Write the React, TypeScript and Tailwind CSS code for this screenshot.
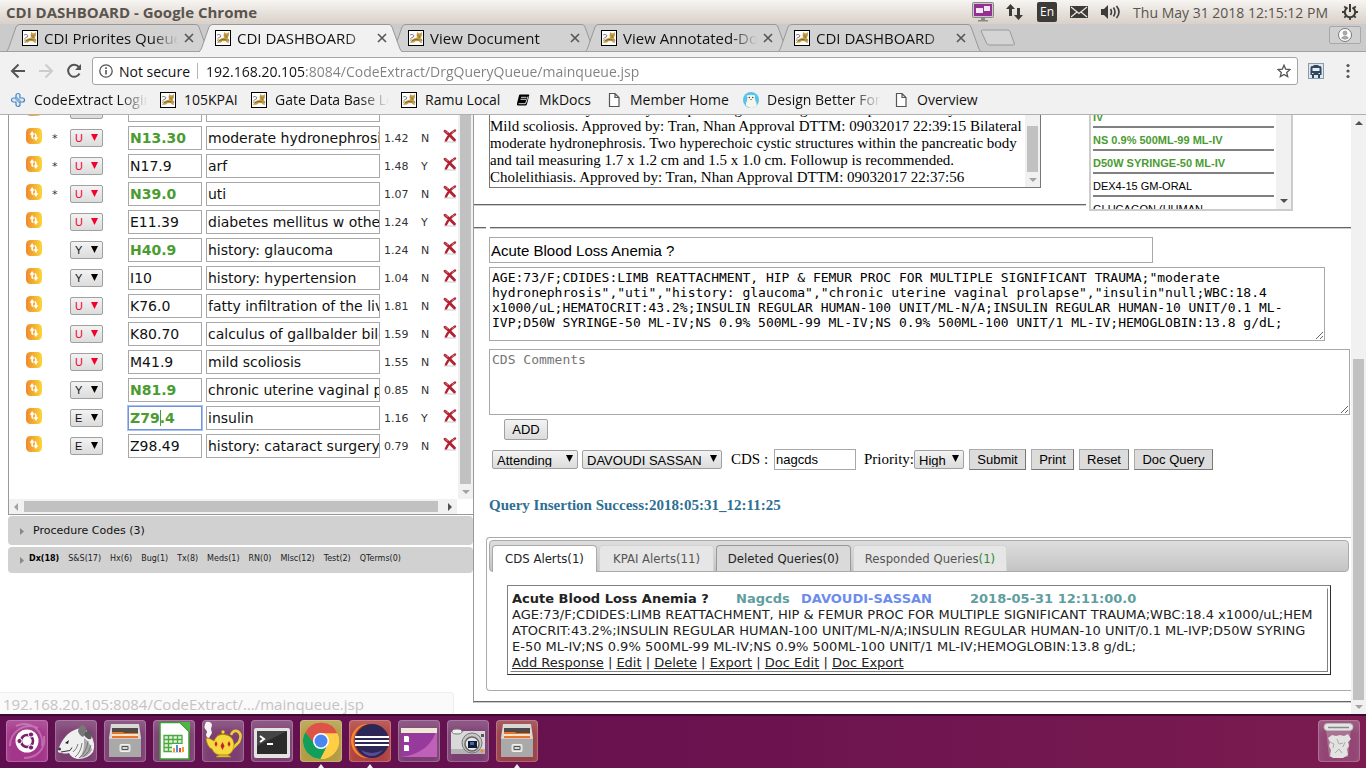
import React from "react";

const ui = "font-['Open_Sans','Noto_Sans',sans-serif]";
const sans = "font-['DejaVu_Sans',sans-serif]";
const arial = "font-['Liberation_Sans',sans-serif]";
const serif = "font-['Liberation_Serif',serif]";
const bevel = "border border-[#a0a0a0] rounded-[2px] bg-linear-to-b from-[#f3f3f3] to-[#dcdcdc]";
const flatButton = "h-[21px] border border-t-[#aaa] border-l-[#aaa] border-r-[#777] border-b-[#777] bg-[#dcdcdc]";

function CatIcon() {
  return (
    <svg className="size-4 shrink-0" viewBox="0 0 16 16">
      <rect x=".5" y=".5" width="15" height="15" fill="#fff" stroke="#000" />
      <path d="M2 13q1-3.500 4-4.500l3-1L8.500 5 9.300 2l1.500 1.300h1.500L13.800 2l.2 3-1 2.500.5 3 .5 2.500-2-.5-1.500-1.500-3 .3-1.500 1.200z" fill="#c9a045" />
      <path d="M4 10.500 8 9.500l3.500.5M9.500 5l1 .6M12.500 5l-.8.600M10.500 7h1.500" stroke="#6b5227" strokeWidth=".8" fill="none" />
      <path d="M2 5q2-1.500 4 .5l-1 2M2.500 8.500 5 7M2 10.500l1.500-1M13 9l1 2" stroke="#777" strokeWidth=".9" fill="none" />
    </svg>
  );
}

function PageIcon() {
  return (
    <svg className="size-4 shrink-0" viewBox="0 0 16 16" fill="#fff" stroke="#555" strokeWidth="1.200">
      <path d="M3.500 1.500h5.500l4 4v9H3.500zM9 1.500v4h4" />
    </svg>
  );
}

function PlusIcon() {
  return (
    <svg className="size-4 shrink-0" viewBox="0 0 16 16" fill="#dcecfa" stroke="#4d84bd" strokeWidth="1.200">
      <path d="M6 6V3.500a2 2 0 0 1 4 0V6h2.500a2 2 0 0 1 0 4H10v2.500a2 2 0 0 1-4 0V10H3.500a2 2 0 0 1 0-4z" />
      <path d="M6 6h2v2H6zM8 8h2v2H8z" fill="#fff" strokeWidth=".8" />
    </svg>
  );
}

function BookIcon() {
  return (
    <svg className="size-4 shrink-0" viewBox="0 0 16 16">
      <path d="M5 2.500h8.500q1 0 .7 1L12 12q-.3 1.500-1.500 1.500H3Q1.500 13.500 2 11.500l2-8q.2-1 1-1z" fill="#000" />
      <path d="M6 5.300h5.500M5.500 7.300H11M3.500 11.700h7L13 4.500" stroke="#f1f1f1" strokeWidth=".9" fill="none" />
    </svg>
  );
}

function BearIcon() {
  return (
    <svg className="size-4 shrink-0" viewBox="0 0 16 16">
      <circle cx="8" cy="8" r="8" fill="#55c3ee" />
      <path d="M4 3.500q1-1 2-.3 2-1 4 0 1-.7 2 .3.400 1-.3 1.800L12.500 9q1.500 2 1 5Q8 18 3 13.500 2.500 11 4 9l.5-3.500Q3.500 4.500 4 3.500z" fill="#f7f4ea" />
      <circle cx="6.300" cy="5.500" r=".7" fill="#333" />
      <circle cx="9.700" cy="5.500" r=".7" fill="#333" />
      <path d="m7 7 1 1 1-1z" fill="#333" />
    </svg>
  );
}

const tabs = [
  { title: "CDI Priorites Queue", active: false },
  { title: "CDI DASHBOARD", active: true },
  { title: "View Document", active: false },
  { title: "View Annotated-Doc", active: false },
  { title: "CDI DASHBOARD", active: false },
];

function TitleBar() {
  return (
    <header className={`flex h-6 shrink-0 items-center bg-linear-to-b from-[#f7f5f2] to-[#d9d0c8] pl-[6px] pr-2 text-[#5a544e] ${ui}`}>
      <h1 className="flex-1 text-[15px] font-bold">CDI DASHBOARD - Google Chrome</h1>
      <div className="flex items-center">
        <svg className="mr-3 h-5 w-[22px]" viewBox="0 0 22 20">
          <rect x=".5" y=".5" width="21" height="15" rx="1" fill="#c9c9c9" stroke="#888" />
          <rect x="2" y="2" width="18" height="12" fill="#94308f" />
          <path d="M4 6h7v5H4zM12 4h6v5h-6z" fill="#f4e6f3" />
          <path d="M9 16h4v2h3v1.500H6V18h3z" fill="#888" />
        </svg>
        <svg className="mr-[14px] h-4 w-[17px]" viewBox="0 0 17 16" fill="#3c3b37">
          <path d="M4.500 0 9 5H6v7H3V5H0zM12.500 16 8 11h3V4h3v7h3z" />
        </svg>
        <span className="mr-[13px] flex h-5 w-5 items-center justify-center rounded-[2px] bg-[#3c3b37] text-[12px] text-white">En</span>
        <svg className="mr-[13px] h-3 w-[18px]" viewBox="0 0 18 12">
          <path d="M0 0h18v12H0z" fill="#3c3b37" />
          <path d="m1 1 8 6.500L17 1M1 11l6-5M17 11l-6-5" stroke="#eee8e2" strokeWidth="1.200" fill="none" />
        </svg>
        <svg className="mr-3 h-4 w-5" viewBox="0 0 20 16" fill="none" stroke="#3c3b37" strokeWidth="1.600">
          <path d="M0 5h3l4-4v14l-4-4H0z" fill="#3c3b37" stroke="none" />
          <path d="M9.500 5q2 3 0 6M12.500 3.500q3 4.500 0 9M15.500 2q5 6 0 12" />
        </svg>
        <time className="mr-[14px] whitespace-nowrap text-[14px]">Thu May 31 2018 12:15:12 PM</time>
        <svg className="size-4" viewBox="0 0 16 16" fill="none" stroke="#3c3b37">
          <path d="M5.500 3.500a5.200 5.200 0 1 0 5 0" strokeWidth="2" />
          <path d="M8 0v8" strokeWidth="2" />
          <path d="M0 8h3M13 8h3M8 13v3M2.300 2.300l2 2M13.700 2.300l-2 2M2.300 13.700l2-2M13.700 13.700l-2-2" strokeWidth="1.800" />
        </svg>
      </div>
    </header>
  );
}

function TabStrip() {
  return (
    <nav className={`flex h-7 shrink-0 items-stretch border-b border-[#a0a0a0] bg-[#cbcbcb] pl-[6px] text-[15px] text-[#111] ${ui}`}>
      {tabs.map((t, i) => (
        <div key={i} className={`relative flex h-7 w-[205px] items-center pl-4 pr-[17px] ${i ? "-ml-3" : ""} ${t.active ? "z-10" : ""}`}>
          <svg className="absolute inset-0 h-full w-full" viewBox="0 0 205 28" preserveAspectRatio="none">
            <path d="M0 28 Q2 26 3 23L10 3Q11 .5 14 .5H190Q192 .5 193 3l8 22q1 3 4 3z" fill={t.active ? "#f1f1f1" : "#d2d2d2"} />
            <path d="M0 28 Q2 26 3 23L10 3Q11 .5 14 .5H190Q192 .5 193 3l8 22q1 3 4 3" fill="none" stroke="#989898" />
            {!t.active && <path d="M0 27.500H205" stroke="#a0a0a0" />}
          </svg>
          <span className="relative flex w-full items-center">
            <CatIcon />
            <a href="#tab" className="ml-[6px] w-[134px] overflow-hidden whitespace-nowrap [mask-image:linear-gradient(90deg,#000_108px,transparent_134px)]">{t.title}</a>
            <button aria-label="Close tab" className="ml-auto">
              <svg className="size-[10px]" viewBox="0 0 10 10" stroke="#555" strokeWidth="1.600"><path d="m1 1 8 8M9 1 1 9" /></svg>
            </button>
          </span>
        </div>
      ))}
      <button aria-label="New tab" className="ml-[-3px] self-center">
        <svg className="h-[18px] w-9" viewBox="0 0 36 18"><path d="M1.500 3q-.8-2 1-2h25q2 0 2.700 2l4 11q.8 2-1 2h-24q-2 0-2.700-2z" fill="#d4d4d4" stroke="#999" /></svg>
      </button>
      <button aria-label="Profile" className="ml-auto mr-[5px] mt-[2px] flex h-[18px] w-8 items-center justify-center rounded-[2px] border border-[#a8a8a8] bg-[#d0d0d0]">
        <svg className="size-[14px]" viewBox="0 0 14 14"><circle cx="7" cy="7" r="6.500" fill="#fff" stroke="#777" /><circle cx="7" cy="5" r="2" fill="#aaa" stroke="#888" strokeWidth=".6" /><path d="M3.500 10q3.500-4 7 0-3.500 2.500-7 0z" fill="#aaa" stroke="#888" strokeWidth=".6" /></svg>
      </button>
    </nav>
  );
}

function Toolbar() {
  return (
    <div className={`flex h-[38px] shrink-0 items-center bg-[#f1f1f1] pl-[10px] pr-4 text-[14px] text-[#111] ${ui}`}>
      <button aria-label="Back" className="mr-3"><svg className="size-4" viewBox="0 0 16 16" fill="none" stroke="#555" strokeWidth="2"><path d="M15 8H2M8.500 1.500 2 8l6.500 6.500" /></svg></button>
      <button aria-label="Forward" className="mr-3"><svg className="size-4" viewBox="0 0 16 16" fill="none" stroke="#ccc" strokeWidth="2"><path d="M1 8h13M7.500 1.500 14 8l-6.500 6.500" /></svg></button>
      <button aria-label="Reload" className="mr-[10px]"><svg className="size-4" viewBox="0 0 16 16" fill="none" stroke="#555" strokeWidth="2"><path d="M13.500 10.500A6 6 0 1 1 12.800 4" /><path d="M15 1v6H9z" fill="#555" stroke="none" /></svg></button>
      <div className="flex h-7 flex-1 items-center rounded-[3px] border border-[#a5a5a5] bg-white pl-[6px] pr-[6px]">
        <svg className="mr-[6px] size-[14px]" viewBox="0 0 14 14" fill="none" stroke="#555"><circle cx="7" cy="7" r="6.200" strokeWidth="1.300" /><path d="M7 6v4.500M7 3.300V5" strokeWidth="1.600" /></svg>
        <span className="w-[70px] whitespace-nowrap">Not secure</span>
        <span className="mx-2 h-4 w-px bg-[#b5b5b5]" />
        <input aria-label="Address" defaultValue="192.168.20.105:8084/CodeExtract/DrgQueryQueue/mainqueue.jsp" className="min-w-0 flex-1 bg-[linear-gradient(90deg,#111_99px,#808080_99px)] bg-clip-text text-transparent outline-none" />
        <button aria-label="Bookmark this page"><svg className="size-[14px]" viewBox="0 0 14 14" fill="none" stroke="#555" strokeWidth="1.300"><path d="m7 1.200 1.700 4 4.300.4-3.300 2.800 1 4.200L7 10.400l-3.700 2.200 1-4.200L1 5.600l4.300-.4z" /></svg></button>
      </div>
      <svg className="ml-[10px] mr-[22px] size-4" viewBox="0 0 16 16">
        <rect x=".5" y=".5" width="15" height="15" fill="#dfe6ec" stroke="#8b9cab" />
        <path d="M5.500 2h5v1H12q1.500 0 1.500 2v7h-11V5Q2.500 3 4 3h1.500zM4 12h2v3H4zM10 12h2v3h-2z" fill="#2f4760" />
        <path d="M4.500 5h7v3h-7zM4 10h1.500v1H4zM10.500 10H12v1h-1.500z" fill="#e8eef3" />
      </svg>
      <button aria-label="Menu"><svg className="h-4 w-1" viewBox="0 0 4 16" fill="#555"><circle cx="2" cy="2.500" r="1.600" /><circle cx="2" cy="8" r="1.600" /><circle cx="2" cy="13.500" r="1.600" /></svg></button>
    </div>
  );
}

function Bookmark({ icon, label, width, fade }: { icon: React.ReactNode; label: string; width: string; fade?: boolean }) {
  return (
    <a href="#bookmark" className={`flex shrink-0 items-center gap-2 ${width}`}>
      {icon}
      <span className={`min-w-0 flex-1 overflow-hidden whitespace-nowrap ${fade ? "[mask-image:linear-gradient(90deg,#000_75%,transparent_100%)]" : ""}`}>{label}</span>
    </a>
  );
}

function Bookmarks() {
  return (
    <div className={`flex h-[25px] shrink-0 items-start border-b border-[#b0b0b0] bg-[#f1f1f1] pl-[10px] text-[14px] leading-5 text-[#111] ${ui}`}>
      <Bookmark icon={<PlusIcon />} label="CodeExtract Login" width="w-[138px] mr-3" fade />
      <Bookmark icon={<CatIcon />} label="105KPAI" width="w-[91px]" />
      <Bookmark icon={<CatIcon />} label="Gate Data Base Login" width="w-[138px] mr-3" fade />
      <Bookmark icon={<CatIcon />} label="Ramu Local" width="w-[114px]" />
      <Bookmark icon={<BookIcon />} label="MkDocs" width="w-[91px]" />
      <Bookmark icon={<PageIcon />} label="Member Home" width="w-[137px]" />
      <Bookmark icon={<BearIcon />} label="Design Better Forms" width="w-[138px] mr-3" fade />
      <Bookmark icon={<PageIcon />} label="Overview" width="w-[100px]" />
    </div>
  );
}

function Arrow({ dir, dark }: { dir: "up" | "down" | "left" | "right"; dark?: boolean }) {
  const d = { up: "M0 6h8L4 2z", down: "M0 2h8L4 6z", left: "M6 0v8L2 4z", right: "M2 0v8l4-4z" }[dir];
  return <svg className="size-2 shrink-0" viewBox="0 0 8 8" fill={dark ? "#505050" : "#a3a3a3"}><path d={d} /></svg>;
}

const codes = [
  { star: false, poa: "U", code: "", hit: false, text: "", w: "", yn: "" },
  { star: true, poa: "U", code: "N13.30", hit: true, text: "moderate hydronephrosis", w: "1.42", yn: "N" },
  { star: true, poa: "U", code: "N17.9", hit: false, text: "arf", w: "1.48", yn: "Y" },
  { star: true, poa: "U", code: "N39.0", hit: true, text: "uti", w: "1.07", yn: "N" },
  { star: false, poa: "U", code: "E11.39", hit: false, text: "diabetes mellitus w other", w: "1.24", yn: "Y" },
  { star: false, poa: "Y", code: "H40.9", hit: true, text: "history: glaucoma", w: "1.24", yn: "N" },
  { star: false, poa: "Y", code: "I10", hit: false, text: "history: hypertension", w: "1.04", yn: "N" },
  { star: false, poa: "U", code: "K76.0", hit: false, text: "fatty infiltration of the liver", w: "1.81", yn: "N" },
  { star: false, poa: "U", code: "K80.70", hit: false, text: "calculus of gallbalder bile", w: "1.59", yn: "N" },
  { star: false, poa: "U", code: "M41.9", hit: false, text: "mild scoliosis", w: "1.55", yn: "N" },
  { star: false, poa: "Y", code: "N81.9", hit: true, text: "chronic uterine vaginal prolapse", w: "0.85", yn: "N" },
  { star: false, poa: "E", code: "Z79.4", hit: true, text: "insulin", w: "1.16", yn: "Y", focus: true },
  { star: false, poa: "E", code: "Z98.49", hit: false, text: "history: cataract surgery", w: "0.79", yn: "N" },
];

function CodeTable() {
  return (
    <table className={`-mt-[19px] w-[450px] table-fixed border-collapse text-[11px] text-[#333] ${sans}`}>
      <colgroup>
        <col className="w-[43px]" /><col className="w-[18px]" /><col className="w-[58px]" /><col className="w-[78px]" />
        <col className="w-[178px]" /><col className="w-[37px]" /><col className="w-[22px]" /><col className="w-4" />
      </colgroup>
      <tbody>
        {codes.map((c, i) => (
          <tr key={i} className="h-7">
            <td className="p-0 pb-1 pl-[17px]">
              <svg className="size-4" viewBox="0 0 16 16">
                <defs><linearGradient id={`g${i}`}><stop offset="0" stopColor="#ef8a2c" /><stop offset="1" stopColor="#fbd638" /></linearGradient></defs>
                <rect width="16" height="16" rx="4.500" fill={`url(#g${i})`} />
                <path d="M3.600 6.800 6.100 3l2.500 3.800H7V9.500q0 1 1 1.700-2.700-.2-2.700-2.500V6.800zM12.400 9.200 9.900 13 7.400 9.200H9V6.500q0-1-1-1.700 2.700.2 2.700 2.500v1.900z" fill="#fff" />
              </svg>
            </td>
            <td className="p-0 pt-[2px]">{c.star ? "*" : ""}</td>
            <td className="p-0 pb-px">
              <span className="relative block w-[33px]">
                <select aria-label="POA" defaultValue={c.poa} className={`block h-[18px] w-full appearance-none pl-1 text-[11px] ${arial} ${bevel} ${c.poa === "U" ? "text-[#f5002e]" : "text-[#111]"}`}>
                  <option>{c.poa}</option>
                </select>
                <span className={`pointer-events-none absolute right-[5px] top-[5px] ${c.poa === "U" ? "text-[#f5002e]" : "text-black"}`}>
                  <svg className="h-[7px] w-[7px]" viewBox="0 0 7 7" fill="currentColor"><path d="M0 0h7L3.500 7z" /></svg>
                </span>
              </span>
            </td>
            <td className="p-0">
              <span className="relative block w-[74px]">
                <input aria-label="Code" defaultValue={c.code} className={`block h-6 w-full border pl-px text-[14px] ${c.focus ? "border-[#6f93dd] ring-1 ring-[#a9c0f0]" : "border-[#a8a8a8]"} ${c.hit ? "font-bold text-[#4a9c30]" : "text-[#111]"}`} />
                {c.focus && <span className="absolute left-8 top-1 h-4 w-px bg-[#4a9c30]" />}
              </span>
            </td>
            <td className="p-0"><input aria-label="Description" defaultValue={c.text} className="block h-6 w-[174px] border border-[#a8a8a8] pl-px text-[14px] text-[#111]" /></td>
            <td className="p-0 pt-[2px]">{c.w}</td>
            <td className="p-0 pt-[2px]">{c.yn}</td>
            <td className="p-0 pb-1">
              <button aria-label="Delete code" className="block">
                <svg className="size-[14px]" viewBox="0 0 14 14" fill="none">
                  <path d="M1 13h12" stroke="#ddd" strokeWidth="1.500" />
                  <path d="M2 2.200q5 4 9.500 8.800" stroke="#b3202f" strokeWidth="2.800" strokeLinecap="round" />
                  <path d="M12 1.500Q6 5 3 11.500" stroke="#b3202f" strokeWidth="2.400" strokeLinecap="round" />
                  <path d="M2.200 2 5 4.200M9 3.600l2.500-1.800" stroke="#e07a83" strokeWidth=".9" />
                </svg>
              </button>
            </td>
          </tr>
        ))}
      </tbody>
    </table>
  );
}

const cats = ["S&S(17)", "Hx(6)", "Bug(1)", "Tx(8)", "Meds(1)", "RN(0)", "MIsc(12)", "Test(2)", "QTerms(0)"];

function LeftPanel() {
  return (
    <aside className={`flex w-[473px] shrink-0 flex-col pl-2 ${sans}`}>
      <div className="flex h-[400px] flex-col border-b border-l border-[#999]">
        <div className="flex min-h-0 flex-1">
          <div className="flex-1 overflow-hidden"><CodeTable /></div>
          <div className="flex w-[15px] flex-col items-center bg-[#f1f1f1]">
            <span className="w-[11px] flex-1 bg-[#c1c1c1]" />
            <span className="flex h-[15px] items-center"><Arrow dir="down" /></span>
          </div>
        </div>
        <div className="mr-4 flex h-[15px] items-center bg-[#f1f1f1] px-[3px]">
          <Arrow dir="left" />
          <span className="ml-1 mr-2 h-[11px] flex-1 bg-[#c1c1c1]" />
          <Arrow dir="right" dark />
        </div>
      </div>
      <button className="mt-px flex h-[29px] items-center gap-2 rounded-[4px] bg-[#d1d1d1] pl-[11px] pt-[2px] text-[11px] text-[#111]">
        <svg className="h-[7px] w-[6px]" viewBox="0 0 6 7" fill="#888"><path d="M1 0v7l4-3.500z" /></svg>
        Procedure Codes (3)
      </button>
      <div className="mt-[2px] flex h-[26px] items-center gap-[9px] rounded-[4px] bg-[#d1d1d1] pb-[2px] pl-[11px] text-[8px] text-[#222]">
        <svg className="-mr-[5px] mt-[2px] h-[7px] w-[6px]" viewBox="0 0 6 7" fill="#888"><path d="M1 0v7l4-3.500z" /></svg>
        <a href="#dx" className="font-bold text-black">Dx(18)</a>
        {cats.map((c) => <a key={c} href="#category">{c}</a>)}
      </div>
    </aside>
  );
}

function Drop({ label, value, width }: { label: string; value: string; width: string }) {
  return (
    <span className={`relative ${width}`}>
      <select aria-label={label} defaultValue={value} className={`block h-[19px] w-full appearance-none pb-px pl-1 text-[13px] text-black ${bevel}`}>
        <option>{value}</option>
      </select>
      <span className="pointer-events-none absolute right-[5px] top-[5px]">
        <svg className="size-[7px]" viewBox="0 0 7 7"><path d="M0 0h7L3.500 7z" /></svg>
      </span>
    </span>
  );
}

const orders = [
  { t: "NS 0.9% 500ML-99 ML-IV", hit: true },
  { t: "D50W SYRINGE-50 ML-IV", hit: true },
  { t: "DEX4-15 GM-ORAL", hit: false },
  { t: "GLUCAGON (HUMAN", hit: false },
];

function QueryForm() {
  return (
    <form className={`pl-4 text-black ${arial}`} onSubmit={(e) => e.preventDefault()}>
      <input aria-label="Query title" defaultValue="Acute Blood Loss Anemia ?" className="mt-2 block h-[26px] w-[664px] max-w-full border border-[#a8a8a8] pl-px text-[15px]" />
      <textarea
        aria-label="Query text"
        defaultValue={'AGE:73/F;CDIDES:LIMB REATTACHMENT, HIP & FEMUR PROC FOR MULTIPLE SIGNIFICANT TRAUMA;"moderate hydronephrosis","uti","history: glaucoma","chronic uterine vaginal prolapse","insulin"null;WBC:18.4 x1000/uL;HEMATOCRIT:43.2%;INSULIN REGULAR HUMAN-100 UNIT/ML-N/A;INSULIN REGULAR HUMAN-10 UNIT/0.1 ML-IVP;D50W SYRINGE-50 ML-IV;NS 0.9% 500ML-99 ML-IV;NS 0.9% 500ML-100 UNIT/1 ML-IV;HEMOGLOBIN:13.8 g/dL;'}
        className="mt-1 block h-[74px] w-[836px] max-w-full resize border border-[#a8a8a8] p-[2px] font-['DejaVu_Sans_Mono',monospace] text-[13px] leading-[15px]"
      />
      <textarea aria-label="CDS Comments" placeholder="CDS Comments" className="mt-2 block h-[66px] w-[861px] max-w-full resize border border-[#a8a8a8] p-[2px] font-['DejaVu_Sans_Mono',monospace] text-[13px] leading-[15px] placeholder:text-[#757575]" />
      <button className={`ml-[15px] mt-1 block h-[21px] w-11 text-[13px] ${bevel}`}>ADD</button>
      <div className="ml-[3px] mt-[9px] flex h-[21px] items-center whitespace-nowrap text-[13px]">
        <Drop label="Provider type" value="Attending" width="w-[86px] mr-1" />
        <Drop label="Provider" value="DAVOUDI SASSAN" width="w-[140px]" />
        <label htmlFor="cds" className={`ml-[9px] w-[43px] text-[15px] ${serif}`}>CDS :</label>
        <input id="cds" defaultValue="nagcds" className="h-[21px] w-[82px] border border-[#a8a8a8] pl-px" />
        <span className={`ml-2 w-[50px] text-[15px] ${serif}`}>Priority:</span>
        <Drop label="Priority" value="High" width="w-[50px]" />
        <span className="ml-[5px] flex gap-[5px]">
          <button className={`w-[57px] ${flatButton}`}>Submit</button>
          <button className={`w-[43px] ${flatButton}`}>Print</button>
          <button className={`w-[50px] ${flatButton}`}>Reset</button>
          <button className={`w-[79px] ${flatButton}`}>Doc Query</button>
        </span>
      </div>
    </form>
  );
}

const alertTabs = [
  { t: "CDS Alerts", n: "(1)", w: "w-[105px]", c: "border-[#aaa] bg-white text-[#222] h-[27px]" },
  { t: "KPAI Alerts", n: "(11)", w: "w-[115px]", c: "border-[#d3d3d3] border-b-0 bg-[#e6e6e6] text-[#555] h-[26px]" },
  { t: "Deleted Queries", n: "(0)", w: "w-[135px]", c: "border-[#999] border-b-0 bg-[#dadada] text-[#222] h-[26px]" },
  { t: "Responded Queries", n: "(1)", w: "w-[154px]", c: "border-[#d3d3d3] border-b-0 bg-[#e6e6e6] text-[#555] h-[26px]", green: true },
];

const alertLines = [
  "AGE:73/F;CDIDES:LIMB REATTACHMENT, HIP & FEMUR PROC FOR MULTIPLE SIGNIFICANT TRAUMA;WBC:18.4 x1000/uL;HEM",
  "ATOCRIT:43.2%;INSULIN REGULAR HUMAN-100 UNIT/ML-N/A;INSULIN REGULAR HUMAN-10 UNIT/0.1 ML-IVP;D50W SYRING",
  "E-50 ML-IV;NS 0.9% 500ML-99 ML-IV;NS 0.9% 500ML-100 UNIT/1 ML-IV;HEMOGLOBIN:13.8 g/dL;",
];

function Alerts() {
  const actions = ["Add Response", "Edit", "Delete", "Export", "Doc Edit", "Doc Export"];
  return (
    <section className={`ml-[13px] mt-[23px] h-[154px] rounded-l-[4px] border border-r-0 border-[#aaa] p-[2px] ${sans}`}>
      <div className="flex h-8 items-end gap-[2px] rounded-[4px] border border-[#aaa] bg-linear-to-b from-[#dedede] to-[#c4c4c4] pl-[2px] font-['DejaVu_Sans_Condensed','DejaVu_Sans',sans-serif] text-[13px]">
        {alertTabs.map((a) => (
          <button key={a.t} className={`whitespace-nowrap rounded-t-[4px] border border-b-0 ${a.w} ${a.c} ${a.t === "CDS Alerts" ? "-mb-px" : ""}`}>
            {a.t}<span className={a.green ? "text-[#2c8a2c]" : ""}>{a.n}</span>
          </button>
        ))}
      </div>
      <table className="ml-[18px] mt-[13px] w-[824px] border-separate border-spacing-[2px] border border-[#808080] border-b-[#2c2c2c] border-r-[#2c2c2c] text-[13px] leading-4 text-[#222]">
        <tbody>
          <tr>
            <td className="whitespace-nowrap border border-white border-b-[#808080] border-r-[#808080] p-0 pl-px pt-[2px]">
              <div className="flex font-bold">
                <span className="w-[224px]">Acute Blood Loss Anemia ?</span>
                <span className="w-[65px] text-[#5f9ea0]">Nagcds</span>
                <span className="w-[169px] text-[#6c8cee]">DAVOUDI-SASSAN</span>
                <span className="text-[#5f9ea0]">2018-05-31 12:11:00.0</span>
              </div>
              {alertLines.map((l) => <p key={l}>{l}</p>)}
              <div>
                {actions.map((a, i) => (
                  <React.Fragment key={a}>{i > 0 && " | "}<a href="#action" className="underline">{a}</a></React.Fragment>
                ))}
              </div>
            </td>
          </tr>
        </tbody>
      </table>
    </section>
  );
}

function RightPanel() {
  return (
    <main className="flex min-w-0 flex-1 overflow-hidden bg-white">
      <div className="flex min-w-0 flex-1 flex-col self-start overflow-hidden border-l border-[#999]">
        <div className="flex">
          <div className="w-[612px]">
            <div className={`ml-[15px] flex h-[73px] w-[552px] overflow-hidden border border-t-0 border-[#777] text-[15px] leading-[17px] text-black ${serif}`}>
              <p className="-mt-[14px] flex-1 whitespace-pre-line">
                {"Bilateral renal cysts and hydronephrosis grade changes of the spine anteriorly\nMild scoliosis. Approved by: Tran, Nhan Approval DTTM: 09032017 22:39:15 Bilateral moderate hydronephrosis. Two hyperechoic cystic structures within the pancreatic body and tail measuring 1.7 x 1.2 cm and 1.5 x 1.0 cm. Followup is recommended. Cholelithiasis. Approved by: Tran, Nhan Approval DTTM: 09032017 22:37:56"}
              </p>
              <div className="flex w-[15px] flex-col items-center bg-[#f1f1f1]">
                <span className="mt-[11px] w-[11px] flex-1 bg-[#c1c1c1]" />
                <span className="flex h-[15px] items-center"><Arrow dir="down" /></span>
              </div>
            </div>
            <hr className="mt-4 border-b border-t border-b-[#ccc] border-t-[#666]" />
          </div>
          <div className="ml-[3px] flex h-24 w-[204px] overflow-hidden border-2 border-t-0 border-[#ccc]">
            <ul className={`ml-[2px] flex-1 overflow-hidden text-[11px] leading-[13px] text-black ${arial}`}>
              <li className="flex h-[13px] items-end overflow-hidden border-b-2 border-[#808080] pb-[2px] font-bold text-[#4a9c30]">IV</li>
              {orders.map((o) => (
                <li key={o.t} className={`h-[23px] whitespace-nowrap border-b-2 border-[#808080] pt-[6px] ${o.hit ? "font-bold text-[#4a9c30]" : ""}`}>{o.t}</li>
              ))}
            </ul>
            <div className="ml-[2px] flex w-[15px] items-end justify-center bg-[#f1f1f1] pb-1"><Arrow dir="down" dark /></div>
          </div>
        </div>
        <div className="mt-4 flex gap-1">
          <hr className="w-3 border-b border-t border-b-[#ccc] border-t-[#666]" />
          <hr className="flex-1 border-b border-t border-b-[#ccc] border-t-[#666]" />
        </div>
        <div className="-ml-px flex flex-col">
          <QueryForm />
          <p className={`ml-4 mt-[27px] text-[15px] font-bold leading-[17px] text-[#2f6f93] ${serif}`}>Query Insertion Success:2018:05:31_12:11:25</p>
          <Alerts />
        </div>
        <hr className="mt-[10px] border-b border-t border-b-[#ccc] border-t-[#666]" />
      </div>
      <div className="flex w-[15px] shrink-0 flex-col items-center bg-[#f1f1f1]">
        <span className="flex h-[15px] items-center"><Arrow dir="up" dark /></span>
        <span className="mt-auto h-[57%] w-[11px] bg-[#c1c1c1]" />
        <span className="flex h-[14px] items-center"><Arrow dir="down" /></span>
      </div>
    </main>
  );
}

function Cabinet() {
  return (
    <g>
      <path d="M7 4h28l2 14v19H5V18z" fill="#d9d9d7" />
      <path d="M8 8h26v9H8z" fill="#4d4a48" />
      <path d="M8 12h11l1 1h14v5H8z" fill="#e8752a" />
      <path d="M8 14h26v2H8z" fill="#fbe3c8" />
      <path d="M5 18h32v19H5z" fill="#a9a9a9" />
      <path d="M5 18h32v1H5z" fill="#ccc" />
      <rect x="16" y="24.500" width="10" height="7" rx="1" fill="#d5d5d5" stroke="#fff" strokeWidth=".8" />
      <path d="M18 26.500h6v3h-6z" fill="#d5d5d5" stroke="#555" />
    </g>
  );
}

const apps: { name: string; tile: string; open?: boolean; art: React.ReactNode }[] = [
  {
    name: "Dash", tile: "bg-[#a3358a]", art: (
      <g><path d="M4 26C4 12 18 2 32 8M38 16c2 14-8 22-20 22M10 6c14-6 28 4 26 20" fill="none" stroke="#d9a0cc" strokeWidth="2" opacity=".5" />
        <circle cx="21" cy="21" r="11.500" fill="#fff" /><circle cx="21" cy="21" r="6" fill="none" stroke="#7b2167" strokeWidth="2.600" />
        <g fill="#7b2167" stroke="#fff"><circle cx="13.500" cy="21" r="2.600" /><circle cx="25" cy="14.500" r="2.600" /><circle cx="25" cy="27.500" r="2.600" /></g></g>
    ),
  },
  {
    name: "Possum", tile: "bg-[#7d3f73]", art: (
      <g><path d="M3 30Q9 13 22 9q7-3 14 6 5 9 2 17-5 7-15 7-7-1-9-6-4 1-7 0-5 0-4-3z" fill="#efefef" />
        <path d="M23 11q1-6 5-6 4 1 3 8l-3 4q-4-2-5-6z" fill="#777" />
        <path d="M29 15q2-5 6-4 3 4 1 8-4 1-7-4z" fill="#5c5c5c" />
        <path d="M24 38q6-6 5-20 6 4 8 12-3 7-13 8z" fill="#a9a9a9" />
        <path d="M20 37q6-5 7-14M24 38q8-6 9-17M28 37q7-5 8-12M18 32q4-3 5-8" fill="none" stroke="#6f6f6f" strokeWidth=".9" />
        <path d="m10 23 4-3-1 4z" fill="#222" /><circle cx="4.500" cy="29" r="1.600" fill="#444" /><path d="m6 32 9-1.500 2-3" stroke="#333" fill="none" /></g>
    ),
  },
  { name: "Files", tile: "bg-[#7d3f73]", art: <Cabinet /> },
  {
    name: "Calc", tile: "bg-[#7d3f73]", art: (
      <g><path d="M7 2.500h20l9 9V39H7z" fill="#fff" stroke="#38a12f" strokeWidth="1.500" /><path d="M27 2h10v10z" fill="#4fb545" />
        <path d="M11 15.500h18v16H11z" fill="#e0f3dd" /><path d="M11 15.500h18v16H11zM11 19.500h18M11 23.500h18M11 27.500h18M15.500 15.500v16M20 15.500v16M24.500 15.500v16" fill="none" stroke="#4aa83f" strokeWidth="1.300" />
        <path d="M19 24h12v8H19z" fill="#fff" /><path d="M20 28h2v4h-2zM29 27h2v5h-2z" fill="#f49b36" /><path d="M23 25h2v7h-2z" fill="#4b8fd6" /><path d="M26 28h2v4h-2z" fill="#e04a33" /></g>
    ),
  },
  {
    name: "Teapot", tile: "bg-[#7d3f73]", art: (
      <g><path d="M4 2q5-1 6 3l-1 4 1 4-3 5q-3 0-3-4 2-2 0-4-3-3 0-8z" fill="#f4f4f4" />
        <path d="M29 15q2-5 6-4 6 3 2 11l-7 7" fill="none" stroke="#f0cd35" strokeWidth="2.600" />
        <path d="M4 18q4 0 8 3 3-7 9-7 10 1 11 10 0 8-6 11l3 2H14l3-2q-5-1-7-6-5-2-6-11z" fill="#f5d93e" stroke="#b38b10" strokeWidth=".7" />
        <path d="M15 15.500q6-3 12 0M16 35h11" stroke="#a67d10" fill="none" /><circle cx="21" cy="12" r="1.700" fill="#f5d93e" stroke="#b38b10" strokeWidth=".5" />
        <path d="m14 21 1.500 3-1.500 3-1.500-3zM20.500 22l2 4-2 4-2-4zM27 21l1.500 3-1.500 3-1.500-3z" fill="#c8202c" /></g>
    ),
  },
  {
    name: "Terminal", tile: "bg-[#7d3f73]", art: (
      <g><rect x="3" y="8" width="36" height="30" rx="2" fill="#e3e3e1" /><path d="M6 11h30v23H6z" fill="#2b2b2b" /><path d="M6 11h30L6 26z" fill="#454545" /><path d="m9 16 4 3-4 3M16 24h6" stroke="#fff" strokeWidth="2" fill="none" /></g>
    ),
  },
  {
    name: "Chrome", tile: "bg-[#b49c45]", open: true, art: (
      <g><circle cx="21" cy="21" r="18" fill="#ffce44" /><path d="M5.400 12A18 18 0 0 1 37.500 13.500H21L14 25z" fill="#dd5347" /><path d="M5.400 12A18 18 0 0 0 20.500 39L28 25l-12 1z" fill="#119f5b" /><path d="M21 13.500h16.500A18 18 0 0 1 20.500 39L27.500 25z" fill="#ffce44" /><circle cx="21" cy="21" r="8" fill="#fff" /><circle cx="21" cy="21" r="6.500" fill="#4a86f0" /></g>
    ),
  },
  {
    name: "Eclipse", tile: "bg-[#b04341]", open: true, art: (
      <g><ellipse cx="18" cy="21" rx="16" ry="17" fill="#f58a26" /><circle cx="21.500" cy="21" r="17" fill="#b04341" /><circle cx="23" cy="21" r="17" fill="#2e2655" /><path d="M12 30q11 6 22 0-5 6-11 6-7 0-11-6z" fill="#5a4b98" /><path d="M6 17h34M6 21h34M6 25h34" stroke="#fff" strokeWidth="2" /></g>
    ),
  },
  {
    name: "Desktop", tile: "bg-[#7d3f73]", art: (
      <g><path d="M3 8h36v29H3z" fill="#963a9e" /><path d="M3 37q30-4 36-29v29z" fill="#c060b8" /><path d="M3 8h36v5H3z" fill="#edebd6" /><path d="M6 16h4l1 1v5H6zM6 25h4l1 1v5H6z" fill="#fff" /></g>
    ),
  },
  {
    name: "Camera", tile: "bg-[#7d3f73]", art: (
      <g><path d="M4 12h10l3-1h21v23H4z" fill="#d9d9d9" /><path d="M4 29h34v5H4z" fill="#b3b3b3" /><ellipse cx="10" cy="11.500" rx="5" ry="2.500" fill="#efefef" stroke="#777" /><circle cx="25" cy="23" r="10" fill="#c6c6c6" stroke="#777" /><circle cx="25" cy="24" r="7" fill="#e8e8e8" stroke="#666" strokeWidth="1.500" /><path d="M21 21h9v7h-9z" fill="#131c30" /><path d="M23 22h4v3h-4z" fill="#3c6cad" /><path d="M34 14h3v3h-3z" fill="#555" /><circle cx="35" cy="31" r="1.500" fill="#ee8a26" /></g>
    ),
  },
  { name: "Files window", tile: "bg-[#9a4048]", open: true, art: <Cabinet /> },
];

function Dock() {
  return (
    <footer className="flex h-[54px] shrink-0 items-start border-t-2 border-[#3d0833] bg-linear-to-r from-[#5f0f4f] via-[#6a124f] to-[#7b1b50] pl-[6px] pr-[6px] pt-1">
      <div className="flex flex-1 gap-[7px]">
        {apps.map((a) => (
          <button key={a.name} aria-label={a.name} className="relative flex h-12 w-[42px] flex-col items-center justify-between">
            <span className={`size-[42px] overflow-hidden rounded-[4px] shadow-[inset_0_0_0_1px_rgba(255,255,255,0.2),inset_0_8px_8px_rgba(255,255,255,0.15)] ${a.tile}`}>
              <svg viewBox="0 0 42 42" className="size-full">{a.art}</svg>
            </span>
            {a.open && <svg className="h-1 w-[6px]" viewBox="0 0 6 4" fill="#eee"><path d="M0 4 3 0l3 4z" /></svg>}
          </button>
        ))}
      </div>
      <button aria-label="Trash" className="size-[42px] rounded-[4px] bg-[#934573] shadow-[inset_0_0_0_1px_rgba(255,255,255,0.2),inset_0_8px_8px_rgba(255,255,255,0.12)]">
        <svg viewBox="0 0 42 42">
          <path d="M8 9h25l-3 28H11z" fill="#b58ba4" opacity=".65" />
          <path d="m10 18 4-3 4 1 4-1 4 1 4-2 3 5-3 3 1 4-2 3 1 6-5 3-10 0-3-2 1-6-2-4 1-4z" fill="#e2e2e0" />
          <path d="m12 22 4 2-1 4M19 19l2 5 4-1M17 33l4-4 3 4M27 22l-2 5" stroke="#aaa" fill="none" />
          <rect x="6" y="3.500" width="29" height="7" rx="3.500" fill="#e4e4e4" stroke="#bbb" /><path d="M10 7.500h21" stroke="#888" strokeWidth="1.500" />
        </svg>
      </button>
    </footer>
  );
}

export default function App() {
  return (
    <div className="flex h-screen flex-col overflow-hidden bg-white">
      <TitleBar />
      <TabStrip />
      <Toolbar />
      <Bookmarks />
      <div className="relative flex min-h-0 flex-1 overflow-hidden">
        <LeftPanel />
        <RightPanel />
        <div className={`absolute bottom-0 left-0 h-[22px] w-[454px] rounded-tr-[4px] border-r border-t border-[#ededed] bg-[#fafafa] pl-[3px] text-[15px] leading-[22px] text-[#c4c4c4] ${ui}`}>192.168.20.105:8084/CodeExtract/…/mainqueue.jsp</div>
      </div>
      <Dock />
    </div>
  );
}
